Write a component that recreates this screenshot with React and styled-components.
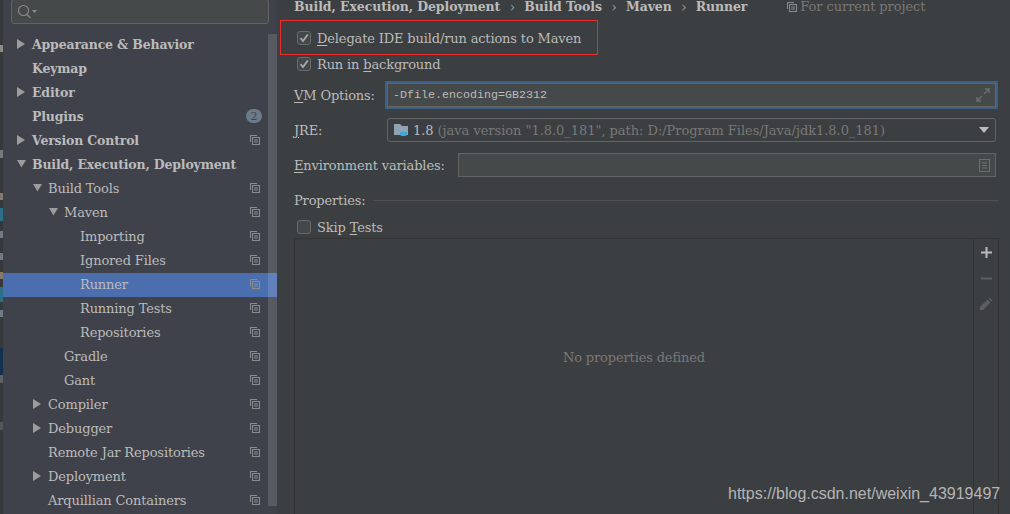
import React from "react";
import styled, { createGlobalStyle } from "styled-components";

const Global = createGlobalStyle`
  html, body { margin: 0; padding: 0; background: #3c3f41; }
  * { box-sizing: border-box; }
`;
const serif = `"DejaVu Serif", serif`;

const Page = styled.div`
  position: relative; width: 1010px; height: 514px; overflow: hidden; display: flex;
  background: #3c3f41; color: #bbbbbb; font: 13px ${serif}; letter-spacing: -0.15px;
`;
const Strip = styled.div`width: 3px; flex: none; background: #36393b; display: flex; flex-direction: column; align-items: flex-start;`;
const Stub = styled.div`width: 3px; flex: none; height: ${p => p.$h}px; margin-top: ${p => p.$gap}px; background: ${p => p.$c};`;
const Sidebar = styled.div`width: 274px; flex: none; background: #3f424a; position: relative; display: flex; flex-direction: column;`;
const Search = styled.div`
  margin: -1px 0 0 8px; width: 258px; height: 25px; flex: none; border: 1px solid #646464; border-radius: 3px;
  background: #45494a; display: flex; align-items: center; padding-left: 5px; color: #8c8c8c;
`;
const Tree = styled.div`margin-top: 9px; display: flex; flex-direction: column;`;
const Row = styled.div`
  height: 24px; flex: none; display: flex; align-items: center; position: relative;
  padding: 0 17px 2px ${p => 29 + p.$level * 16}px;
  background: ${p => p.$selected ? "#4b6eaf" : "transparent"};
`;
const Arrow = styled.svg`position: absolute; left: ${p => 14 + p.$level * 16}px; top: 6px; width: 10px; height: 10px; fill: #9c9c9c;`;
const Label = styled.span`
  flex: 1; white-space: nowrap;
  ${p => p.$bold && "font-weight: 700; font-size: 12.5px; letter-spacing: -0.17px;"}
`;
const Badge = styled.span`
  width: 16px; height: 14px; border-radius: 7px; background: #6c7b89; color: #3f424a; margin-right: -2px;
  font-size: 11px; display: flex; align-items: center; justify-content: center;
`;
const Thumb = styled.div`position: absolute; left: 265px; top: 34px; width: 9px; height: 472px; background: rgba(255,255,255,.13);`;
const Main = styled.div`flex: 1; min-width: 0; padding-left: 17px; padding-right: 11px; display: flex; flex-direction: column;`;
const Crumbs = styled.div`
  height: 13px; flex: none; display: flex; align-items: center; white-space: nowrap;
`;
const Crumb = styled.span`font-weight: 700; font-size: 12.5px; letter-spacing: -0.09px;`;
const Sep = styled.span`width: 24px; text-align: center; color: #9a9a9a; font-size: 14px;`;
const Scope = styled.span`display: flex; align-items: center; gap: 3px; margin-left: 40px; color: #787878; letter-spacing: -0.08px;`;
const CheckRow = styled.label`
  height: 26px; flex: none; display: flex; align-items: center; gap: 6px; padding-left: 3px;
  margin-top: ${p => p.$mt || 0}px;
`;
const Box = styled.span`
  width: 14px; height: 14px; flex: none; border: 1px solid #6b6b6b; border-radius: 3px; background: #43494a;
  display: flex; align-items: center; justify-content: center;
`;
const FormRow = styled.div`display: flex; align-items: center; flex: none; height: ${p => p.$h}px; margin-top: ${p => p.$mt}px;`;
const FieldLabel = styled.span`width: ${p => p.$w}px; flex: none; white-space: nowrap;`;
const Input = styled.div`
  flex: 1; height: 24px; margin-right: 3px; display: flex; align-items: center;
  justify-content: ${p => p.$focus ? "space-between" : "flex-end"};
  background: #45494a; border: 1px solid #646464; padding: 0 5px;
  ${p => p.$focus && "outline: 2px solid #3d6185; font-family: 'Liberation Mono', monospace; font-size: 11.67px; letter-spacing: 0;"}
`;
const Combo = styled.div`
  flex: 1; height: 24px; margin-right: 3px; display: flex; align-items: center; gap: 4px; padding: 0 6px;
  border: 1px solid #646464; border-radius: 3px; white-space: nowrap; letter-spacing: -0.04px;
`;
const Dim = styled.span`color: #787878; flex: 1;`;
const Caret = styled.svg`width: 10px; height: 6px; fill: #bbbbbb; flex: none;`;
const Group = styled.div`display: flex; align-items: center; gap: 7px; margin-top: 14px; height: 18px; flex: none;`;
const GroupLine = styled.div`flex: 1; height: 1px; background: #515151;`;
const Table = styled.div`margin-top: -2px; flex: 1; display: flex; border: 1px solid #323232; border-bottom: 0;`;
const Empty = styled.div`flex: 1; display: flex; align-items: center; justify-content: center; color: #787878; padding-bottom: 39px;`;
const Tools = styled.div`width: 25px; flex: none; border-left: 1px solid #323232; display: flex; flex-direction: column; align-items: center;`;
const ToolBtn = styled.div`height: 26px; display: flex; align-items: center; justify-content: center;`;
const RedFrame = styled.div`position: absolute; left: 280px; top: 20px; width: 318px; height: 35px; border: 1px solid #ee2b2b;`;
const Watermark = styled.div`position: absolute; left: 728px; top: 485px; font: 16px "Liberation Sans", sans-serif; letter-spacing: 0; color: #b4b4b4;`;
const Under = styled.span`text-decoration: underline; text-underline-offset: 2px;`;

const Copy = () => (
  <svg width="10" height="10" viewBox="0 0 10 10" fill="none" stroke="#8a8d90" strokeWidth="1" style={{ flex: "none" }}>
    <path d="M.5 7V.5H7" /><rect x="2.500" y="2.500" width="7" height="7" /><path d="M4 5h4M4 7h4" />
  </svg>
);

const stubs = [
  [45, 7, "#8f8b80"], [98, 8, "#77797a"], [35, 7, "#87796c"], [8, 13, "#2c6f88"], [10, 7, "#6f7c88"],
  [15, 7, "#6f7c88"], [12, 7, "#87796c"], [8, 15, "#2c6f88"], [8, 7, "#6f7c88"], [31, 27, "#14304f"],
  [0, 8, "#5f6061"], [39, 8, "#545758"],
];

const items = [
  { t: "Appearance & Behavior", b: 1, a: "r", l: 0, noCopy: 1 },
  { t: "Keymap", b: 1, l: 0, noCopy: 1 },
  { t: "Editor", b: 1, a: "r", l: 0, noCopy: 1 },
  { t: "Plugins", b: 1, l: 0, badge: 1, noCopy: 1 },
  { t: "Version Control", b: 1, a: "r", l: 0 },
  { t: "Build, Execution, Deployment", b: 1, a: "d", l: 0, noCopy: 1 },
  { t: "Build Tools", a: "d", l: 1 },
  { t: "Maven", a: "d", l: 2 },
  { t: "Importing", l: 3 },
  { t: "Ignored Files", l: 3 },
  { t: "Runner", l: 3, sel: 1 },
  { t: "Running Tests", l: 3 },
  { t: "Repositories", l: 3 },
  { t: "Gradle", l: 2 },
  { t: "Gant", l: 2 },
  { t: "Compiler", a: "r", l: 1 },
  { t: "Debugger", a: "r", l: 1 },
  { t: "Remote Jar Repositories", l: 1 },
  { t: "Deployment", a: "r", l: 1 },
  { t: "Arquillian Containers", l: 1 },
];

const Check = ({ on }) => (
  <Box>{on && <svg width="10" height="10" viewBox="0 0 10 10" fill="none" stroke="#a9a9a9" strokeWidth="1.8"><path d="M1.500 5.200 4 8l4.800-6.500" /></svg>}</Box>
);

export default function App() {
  return (
    <Page>
      <Global />
      <Strip>
        {stubs.map(([gap, h, c], i) => <Stub key={i} $gap={gap} $h={h} $c={c} />)}
      </Strip>
      <Sidebar>
        <Search>
          <svg width="21" height="16" viewBox="0 0 21 16" fill="none" stroke="#8c8c8c" strokeWidth="1.1">
            <circle cx="6.500" cy="6.500" r="5" /><path d="M10 10.500 13.500 14" /><path d="M15 6h5l-2.500 3z" fill="#8c8c8c" stroke="none" />
          </svg>
        </Search>
        <Tree>
          {items.map(i => (
            <Row key={i.t} $level={i.l} $selected={i.sel}>
              {i.a && (
                <Arrow $level={i.l} viewBox="0 0 10 10">
                  <path d={i.a === "r" ? "M0 0 8 5 0 10z" : "M0 1h9L4.500 8.500z"} />
                </Arrow>
              )}
              <Label $bold={i.b}>{i.t}</Label>
              {i.badge && <Badge>2</Badge>}
              {!i.noCopy && <Copy />}
            </Row>
          ))}
        </Tree>
        <Thumb />
      </Sidebar>
      <Main>
        <Crumbs>
          <Crumb>Build, Execution, Deployment</Crumb><Sep>›</Sep><Crumb>Build Tools</Crumb><Sep>›</Sep><Crumb>Maven</Crumb><Sep>›</Sep><Crumb>Runner</Crumb>
          <Scope><Copy />For current project</Scope>
        </Crumbs>
        <CheckRow $mt={12}><Check on /><span><Under>D</Under>elegate IDE build/run actions to Maven</span></CheckRow>
        <CheckRow><Check on /><span>Run in <Under>b</Under>ackground</span></CheckRow>
        <FormRow $h={26} $mt={5}>
          <FieldLabel $w={93}><Under>V</Under>M Options:</FieldLabel>
          <Input $focus>
            -Dfile.encoding=GB2312
            <svg width="14" height="14" viewBox="0 0 14 14" fill="none" stroke="#6e6e6e" strokeWidth="1.400"><path d="M8 6l5-5M9 1h4v4M6 8l-5 5M1 9v4h4" /></svg>
          </Input>
        </FormRow>
        <FormRow $h={24} $mt={10}>
          <FieldLabel $w={93}><Under>J</Under>RE:</FieldLabel>
          <Combo>
            <svg width="15" height="14" viewBox="0 0 15 14"><path d="M0 1h6l2 2h6v9H0z" fill="#8fa3b3" /><path d="M6 9h7v2a2 2 0 0 1-2 2H8a2 2 0 0 1-2-2z" fill="#3ea9d8" /></svg>
            1.8 <Dim>(java version "1.8.0_181", path: D:/Program Files/Java/jdk1.8.0_181)</Dim>
            <Caret viewBox="0 0 10 6"><path d="M0 0h10L5 6z" /></Caret>
          </Combo>
        </FormRow>
        <FormRow $h={24} $mt={11}>
          <FieldLabel $w={164}><Under>E</Under>nvironment variables:</FieldLabel>
          <Input>
            <svg width="11" height="13" viewBox="0 0 11 13" fill="none" stroke="#6e6e6e"><rect x=".5" y=".5" width="10" height="12" /><path d="M3 4h5M3 6.500h5M3 9h5" /></svg>
          </Input>
        </FormRow>
        <Group><span>Properties:</span><GroupLine /></Group>
        <CheckRow $mt={5}><Check /><span>Skip <Under>T</Under>ests</span></CheckRow>
        <Table>
          <Empty>No properties defined</Empty>
          <Tools>
            <ToolBtn><svg width="11" height="11" viewBox="0 0 11 11" stroke="#bbbbbb" strokeWidth="2"><path d="M5.500 0v11M0 5.500h11" /></svg></ToolBtn>
            <ToolBtn><svg width="11" height="11" viewBox="0 0 11 11" stroke="#5c5e60" strokeWidth="2"><path d="M0 5.500h11" /></svg></ToolBtn>
            <ToolBtn><svg width="14" height="14" viewBox="0 0 14 14" fill="#5c5e60"><path d="M1 13v-3l7.500-7.500 3 3L4 13zM9.500 1.500l1-1 3 3-1 1z" /></svg></ToolBtn>
          </Tools>
        </Table>
      </Main>
      <RedFrame />
      <Watermark>https://blog.csdn.net/weixin_43919497</Watermark>
    </Page>
  );
}
